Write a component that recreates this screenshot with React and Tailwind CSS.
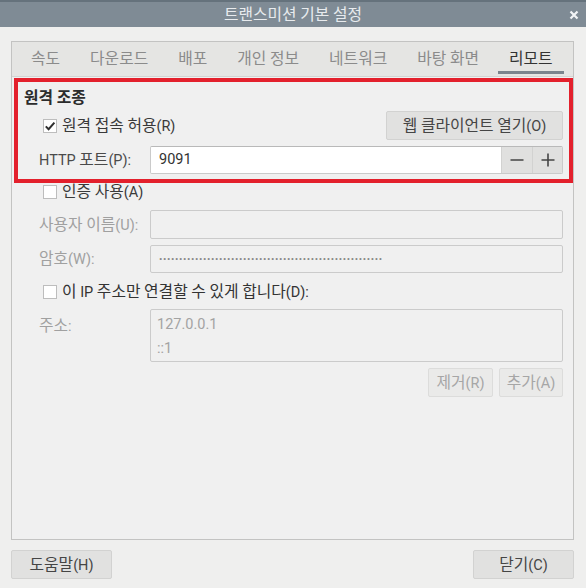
import React from "react";

const FONT = { fontFamily: "Roboto, 'Noto Sans CJK KR', sans-serif" };

function T({ children }) {
  const parts = String(children).split(/([\uAC00-\uD7A3]+)/);
  return (
    <span className="whitespace-pre">
      {parts.map((p, i) =>
        /[\uAC00-\uD7A3]/.test(p) ? (
          <span key={i} className="text-[15.8px]" style={{ fontFamily: "'Noto Sans CJK KR', sans-serif" }}>
            {p}
          </span>
        ) : (
          p
        )
      )}
    </span>
  );
}

function Check({ checked }) {
  return (
    <span className="w-[14px] h-[14px] border border-[#bdbdbd] bg-white flex items-center justify-center shrink-0">
      {checked && (
        <svg width="12" height="12" viewBox="0 0 12 12">
          <path d="M1.8 6.4 L4.6 9.2 L10.4 2.6" fill="none" stroke="#2e2e2e" strokeWidth="2" />
        </svg>
      )}
    </span>
  );
}

function Btn({ children, className = "", disabled }) {
  return (
    <div
      className={
        "flex items-center justify-center rounded-[2px] border " +
        (disabled
          ? "bg-[#eaeae9] border-[#dcdcdb] text-[#a6a6a6] "
          : "bg-[#e1e1e0] border-[#d2d2d1] text-[#454545] ") +
        className
      }
    >
      <T>{children}</T>
    </div>
  );
}

const tabs = ["속도", "다운로드", "배포", "개인 정보", "네트워크", "바탕 화면", "리모트"];

export default function App() {
  return (
    <div
      className="relative w-[586px] h-[588px] bg-[#efefee] flex flex-col text-[14.5px] leading-[20px] text-[#3a3a3a]"
      style={FONT}
    >
      {/* title bar */}
      <div className="h-[27px] bg-[#7f8b95] border-t-2 border-[#65727c] flex items-center">
        <div className="w-[24px]" />
        <div className="flex-1 text-center text-[#e8ebee]">
          <T>트랜스미션 기본 설정</T>
        </div>
        <div className="w-[24px] flex items-center justify-center">
          <svg width="10" height="10" viewBox="0 0 10 10">
            <path d="M1.5 1.5 L8.5 8.5 M8.5 1.5 L1.5 8.5" stroke="#f2f4f6" strokeWidth="2.2" />
          </svg>
        </div>
      </div>

      {/* body */}
      <div className="flex-1 flex flex-col pl-[11px] pr-[12px] pt-[14px]">
        <div className="h-[499px] border border-[#c3c3c2] flex flex-col">
          {/* tabs */}
          <div className="h-[35px] bg-[#e5e5e3] border-b border-[#d3d3d2] flex items-stretch pl-[8px] gap-[8px]">
            {tabs.map((t, i) => {
              const active = i === tabs.length - 1;
              return (
                <div
                  key={t}
                  className={
                    "px-[11px] flex items-center " +
                    (active
                      ? "text-[#333] border-b-[3px] border-[#7b848d] mb-[2px] pt-[4px]"
                      : "text-[#8b8b8b]")
                  }
                >
                  <T>{t}</T>
                </div>
              );
            })}
          </div>

          {/* content */}
          <div className="flex-1 bg-[#f0f0f0] flex flex-col pl-[12px] pr-[10px] pt-[10px]">
            <div className="h-[20px] font-bold text-[#2c2c2c]">
              <T>원격 조종</T>
            </div>

            <div className="mt-[4px] h-[29px] flex items-center justify-between">
              <div className="flex items-center gap-[5px] pl-[19px]">
                <Check checked />
                <T>원격 접속 허용(R)</T>
              </div>
              <Btn className="w-[177px] h-[29px]">웹 클라이언트 열기(O)</Btn>
            </div>

            <div className="mt-[6px] h-[28px] flex items-center">
              <div className="w-[126px] pl-[15px] text-[#4a4a4a]">
                <T>HTTP 포트(P):</T>
              </div>
              <div className="flex-1 h-[28px] flex border border-[#cacaca] border-t-[#b9b9b9] rounded-[2px] overflow-hidden">
                <div className="flex-1 bg-white flex items-center pl-[8px] text-[#333]">9091</div>
                <div className="w-[31px] bg-[#e0e0df] border-l border-[#d2d2d1] flex items-center justify-center">
                  <svg width="14" height="14" viewBox="0 0 14 14">
                    <path d="M0.5 7 H13.5" stroke="#444" strokeWidth="1.6" />
                  </svg>
                </div>
                <div className="w-[30px] bg-[#e0e0df] border-l border-[#d2d2d1] flex items-center justify-center">
                  <svg width="14" height="14" viewBox="0 0 14 14">
                    <path d="M0.5 7 H13.5 M7 0.5 V13.5" stroke="#444" strokeWidth="1.6" />
                  </svg>
                </div>
              </div>
            </div>

            <div className="mt-[7px] h-[22px] flex items-center gap-[5px] pl-[19px]">
              <Check />
              <T>인증 사용(A)</T>
            </div>

            <div className="mt-[7px] h-[29px] flex items-center">
              <div className="w-[126px] pl-[15px] text-[#a0a0a0]">
                <T>사용자 이름(U):</T>
              </div>
              <div className="flex-1 h-[29px] border border-[#cbcbcb] rounded-[2px] bg-[#f0f0f0]" />
            </div>

            <div className="mt-[6px] h-[28px] flex items-center">
              <div className="w-[126px] pl-[15px] text-[#a0a0a0]">
                <T>암호(W):</T>
              </div>
              <div className="flex-1 h-[28px] border border-[#cbcbcb] rounded-[2px] bg-[#f0f0f0] flex items-center pl-[8px] overflow-hidden">
                <span
                  className="text-[12px] leading-[12px] font-bold text-[#8a8a8a] whitespace-nowrap"
                  style={{ fontFamily: "'Liberation Sans', sans-serif" }}
                >
                  {"·".repeat(56)}
                </span>
              </div>
            </div>

            <div className="mt-[8px] h-[22px] flex items-center gap-[5px] pl-[19px] text-[#333]">
              <Check />
              <T>이 IP 주소만 연결할 수 있게 합니다(D):</T>
            </div>

            <div className="mt-[6px] flex items-start">
              <div className="w-[126px] pl-[15px] pt-[6px] text-[#a0a0a0]">
                <T>주소:</T>
              </div>
              <div className="flex-1 h-[53px] border border-[#cbcbcb] rounded-[2px] bg-[#f0f0f0] flex flex-col pl-[6px] pt-[4px] text-[#a3a3a3]">
                <div className="h-[22px] flex items-center">127.0.0.1</div>
                <div className="h-[25px] flex items-center">::1</div>
              </div>
            </div>

            <div className="mt-[6px] flex justify-end gap-[6px]">
              <Btn disabled className="w-[65px] h-[29px]">제거(R)</Btn>
              <Btn disabled className="w-[64px] h-[29px]">추가(A)</Btn>
            </div>
          </div>
        </div>

        <div className="mt-[10px] flex justify-between">
          <Btn className="w-[101px] h-[29px]">도움말(H)</Btn>
          <Btn className="w-[101px] h-[29px]">닫기(C)</Btn>
        </div>
      </div>

      {/* red annotation frame */}
      <div className="absolute left-[14px] top-[78px] w-[559px] h-[105px] border-[4px] border-[#e3202c] pointer-events-none" />
    </div>
  );
}
